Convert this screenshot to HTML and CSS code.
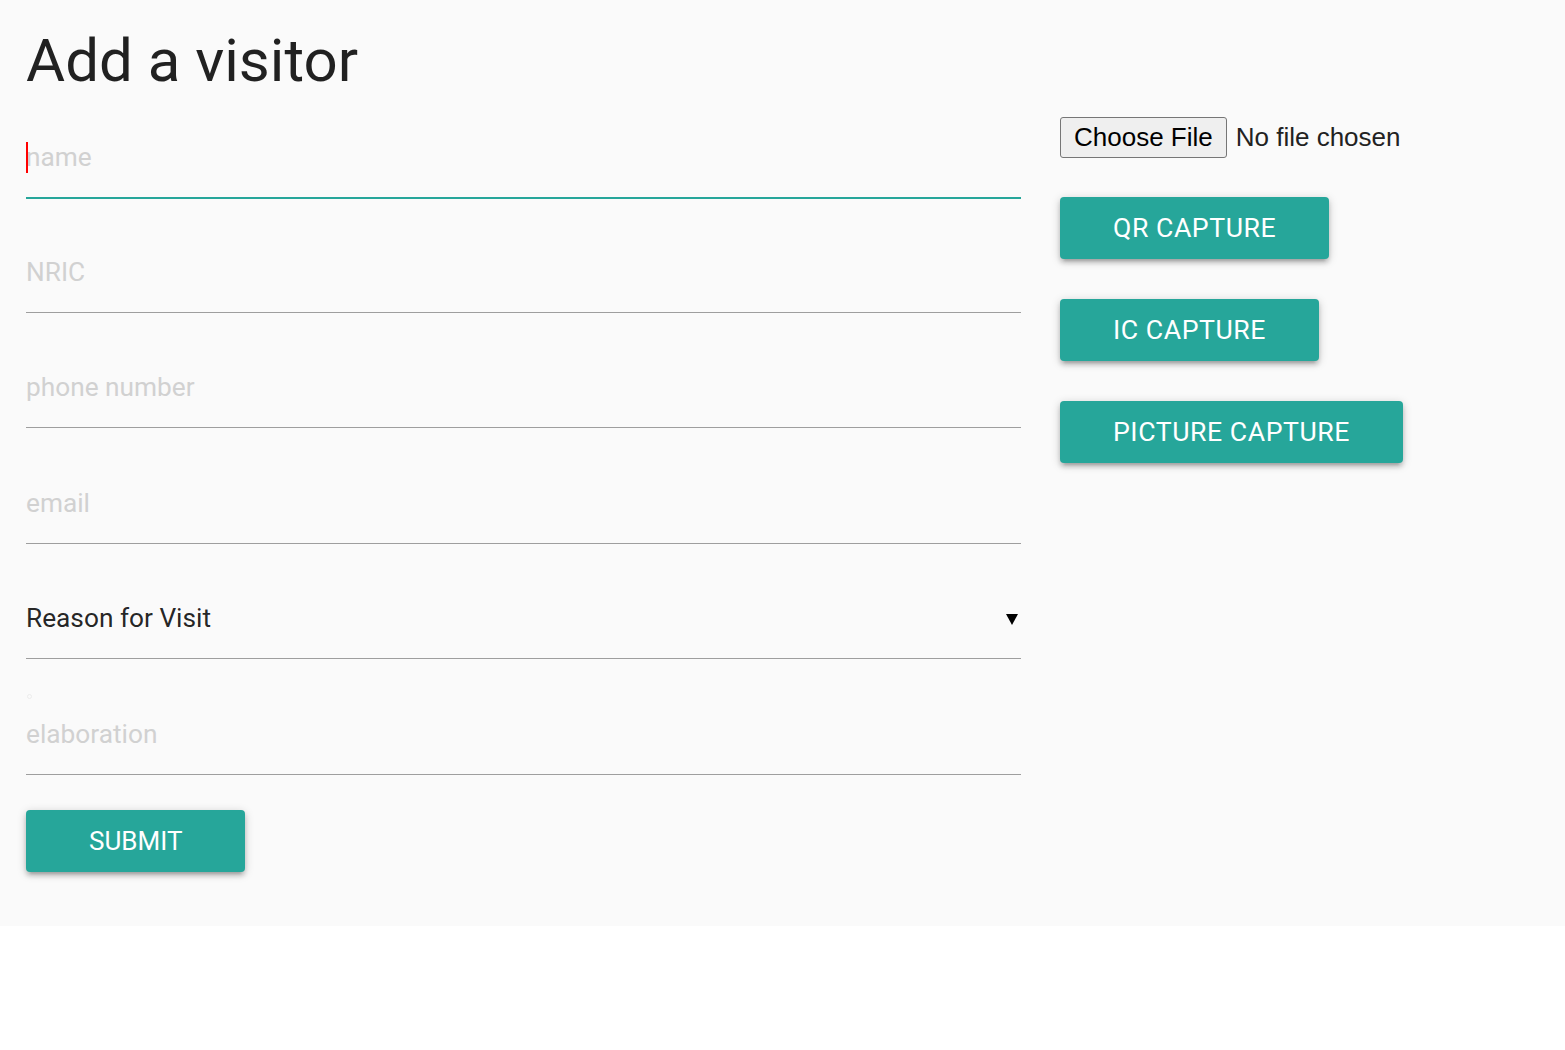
FILE: index.html
```html
<!DOCTYPE html>
<html lang="en">
<head>
<meta charset="utf-8">
<title>Add a visitor</title>
<link rel="stylesheet" href="styles.css">
</head>
<body>
<div class="page">
  <h1 class="title">Add a visitor</h1>
  <div class="layout">
    <form class="form">
      <div class="field field-first is-focused">
        <input class="input" type="text" placeholder="name">
        <span class="caret"></span>
      </div>
      <div class="field">
        <input class="input" type="text" placeholder="NRIC">
      </div>
      <div class="field">
        <input class="input" type="text" placeholder="phone number">
      </div>
      <div class="field">
        <input class="input" type="text" placeholder="email">
      </div>
      <div class="field field-select">
        <span class="select-value">Reason for Visit</span>
        <svg class="select-arrow" width="12" height="12" viewBox="0 0 12 12"><polygon points="0,1 12,1 6,12" fill="#000"/></svg>
      </div>
      <div class="field">
        <span class="dot"></span>
        <input class="input" type="text" placeholder="elaboration">
      </div>
      <button type="button" class="btn btn-submit">SUBMIT</button>
    </form>
    <div class="side">
      <div class="file-row">
        <span class="file-btn">Choose File</span>
        <span class="file-text">No file chosen</span>
      </div>
      <button type="button" class="btn btn-capture">QR CAPTURE</button>
      <button type="button" class="btn btn-capture">IC CAPTURE</button>
      <button type="button" class="btn btn-capture">PICTURE CAPTURE</button>
    </div>
  </div>
</div>
</body>
</html>
```

FILE: styles.css
```css
html, body {
  margin: 0;
  padding: 0;
  background: #ffffff;
}

.page {
  background: #fafafa;
  padding: 23px 0 54px 26px;
  font-family: Roboto, "Noto Sans", sans-serif;
  color: rgba(0, 0, 0, 0.87);
}

.title {
  margin: 0;
  font-family: Roboto, sans-serif;
  font-weight: 400;
  font-size: 60px;
  line-height: 75px;
  color: rgba(0, 0, 0, 0.87);
}

.layout {
  display: flex;
  align-items: flex-start;
  gap: 39px;
}

.form {
  width: 995px;
  margin: 0;
}

.field {
  position: relative;
  padding: 59.4px 0 24px 0;
  border-bottom: 1px solid #9e9e9e;
}

.field-first {
  padding-top: 43.6px;
}

.is-focused {
  border-bottom-color: #26a69a;
  box-shadow: 0 1px 0 0 #26a69a;
}

.input {
  display: block;
  width: 100%;
  height: 31px;
  padding: 0;
  margin: 0;
  border: none;
  outline: none;
  background: transparent;
  font-family: Roboto, sans-serif;
  font-size: 26.25px;
  line-height: 31px;
  color: rgba(0, 0, 0, 0.87);
}

.input::placeholder {
  color: #d1d1d1;
  opacity: 1;
}

.caret {
  position: absolute;
  left: 0;
  top: 43.6px;
  width: 2px;
  height: 31px;
  background: #ff0000;
}

.field-select {
  display: flex;
  align-items: center;
  justify-content: space-between;
}

.select-value {
  display: block;
  height: 31px;
  font-size: 26.25px;
  line-height: 31px;
  color: rgba(0, 0, 0, 0.87);
}

.select-arrow {
  display: block;
  margin-right: 3px;
}

.dot {
  position: absolute;
  left: 1px;
  top: 35px;
  width: 3px;
  height: 3px;
  border: 1px solid #ececec;
  border-radius: 50%;
}

.btn {
  display: block;
  height: 62px;
  border: none;
  border-radius: 4px;
  background: #26a69a;
  color: #ffffff;
  font-family: Roboto, sans-serif;
  font-size: 26.67px;
  line-height: 62px;
  letter-spacing: 0.55px;
  text-transform: uppercase;
  cursor: pointer;
  box-shadow: 0 4px 4px 0 rgba(0, 0, 0, 0.14),
              0 6px 2px -4px rgba(0, 0, 0, 0.12),
              0 2px 10px 0 rgba(0, 0, 0, 0.2);
}

.btn-submit {
  margin-top: 35px;
  padding: 0 63px;
  font-size: 26px;
  letter-spacing: 0;
}

.side {
  display: flex;
  flex-direction: column;
  align-items: flex-start;
  gap: 40px;
  padding-top: 19px;
}

.file-row {
  display: flex;
  align-items: center;
  gap: 9px;
  margin-bottom: -1px;
  font-family: "Liberation Sans", Arial, sans-serif;
  font-size: 26px;
}

.file-btn {
  display: block;
  box-sizing: border-box;
  height: 41px;
  line-height: 39px;
  padding: 0 13px;
  border: 1px solid #767676;
  border-radius: 3px;
  background: #efefef;
  color: #000000;
}

.file-text {
  color: #222222;
}

.btn-capture {
  padding: 0 53px;
}
```
